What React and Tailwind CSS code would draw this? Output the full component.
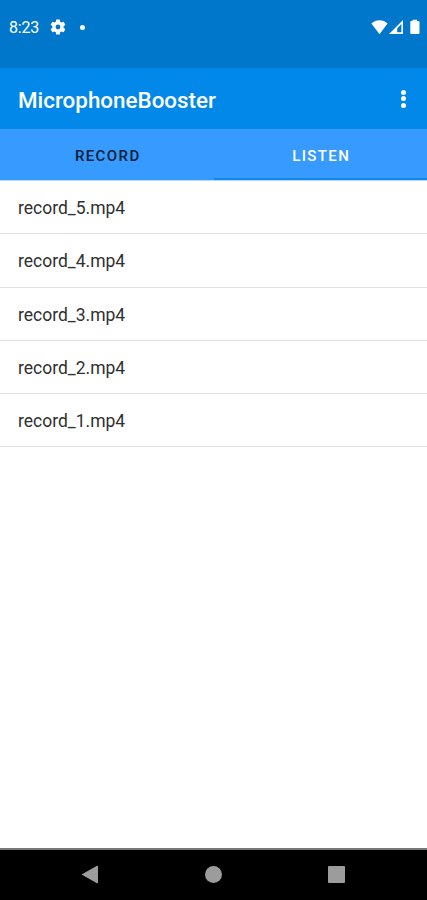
import React from "react";

const recordings = ["record_5.mp4", "record_4.mp4", "record_3.mp4", "record_2.mp4", "record_1.mp4"];

function StatusBar() {
  return (
    <div className="flex h-[68px] shrink-0 items-start bg-[#0077cb] pr-[7px] pl-[9px] pt-[17px] text-white">
      <span className="w-[42px] text-[16px] leading-[22px] tracking-[-0.2px]">8:23</span>
      <svg className="mt-[1px] -ml-[2px] h-[18px] w-[18px]" viewBox="0 0 24 24" fill="currentColor">
        <path d="M19.43 12.98c.04-.32.07-.64.07-.98s-.03-.66-.07-.98l2.11-1.65c.19-.15.24-.42.12-.64l-2-3.46c-.12-.22-.39-.3-.61-.22l-2.49 1c-.52-.4-1.08-.73-1.69-.98l-.38-2.65C14.46 2.18 14.25 2 14 2h-4c-.25 0-.46.18-.49.42l-.38 2.65c-.61.25-1.17.59-1.69.98l-2.49-1c-.23-.09-.49 0-.61.22l-2 3.46c-.13.22-.07.49.12.64l2.11 1.65c-.04.32-.07.65-.07.98s.03.66.07.98l-2.11 1.65c-.19.15-.24.42-.12.64l2 3.46c.12.22.39.3.61.22l2.49-1c.52.4 1.08.73 1.69.98l.38 2.65c.03.24.24.42.49.42h4c.25 0 .46-.18.49-.42l.38-2.65c.61-.25 1.17-.59 1.69-.98l2.49 1c.23.09.49 0 .61-.22l2-3.46c.12-.22.07-.49-.12-.64zM12 15.2A3.2 3.2 0 1 1 12 8.8a3.2 3.2 0 0 1 0 6.4z" />
      </svg>
      <span className="mt-[7.5px] ml-[12.5px] h-[5px] w-[5px] rounded-full bg-white" />
      <div className="mt-[2px] ml-auto flex">
        <svg className="h-[16px] w-[17px]" viewBox="0 0 17 16" fill="currentColor">
          <path d="M.4 4.6C2.5 2.3 5.3 1.2 8.5 1.2s6 1.1 8.1 3.4L8.5 15.2z" />
        </svg>
        <svg className="ml-[1px] h-[16px] w-[15px]" viewBox="0 0 15 16" fill="currentColor" fillRule="evenodd">
          <path d="M14 1v14H0zM12.4 5v8.3h-4.2V9.6z" />
        </svg>
        <svg className="ml-[6px] h-[16px] w-[10px]" viewBox="0 0 10 16" fill="currentColor">
          <path d="M2.6 .7h4.4v1.2h1.6c.5 0 .9.4.9.9v11.3c0 .5-.4.9-.9.9H1.2c-.5 0-.9-.4-.9-.9V2.8c0-.5.4-.9.9-.9h1.4z" />
        </svg>
      </div>
    </div>
  );
}

function Toolbar() {
  return (
    <header className="flex h-[61px] shrink-0 items-center justify-between bg-[#0288e9] pr-[21px] pl-[18px] text-white">
      <h1 className="pt-[3px] text-[22.4px] leading-[30px] font-medium whitespace-nowrap">MicrophoneBooster</h1>
      <button aria-label="More options" className="flex flex-col gap-[1.5px]">
        <span className="h-[5px] w-[5px] rounded-full bg-white" />
        <span className="h-[5px] w-[5px] rounded-full bg-white" />
        <span className="h-[5px] w-[5px] rounded-full bg-white" />
      </button>
    </header>
  );
}

function Tabs() {
  return (
    <nav className="grid h-[52px] shrink-0 grid-cols-2 border-b border-[#b4d7ff] bg-[#379aff] text-[15px] font-medium tracking-[1.4px]">
      <button className="border-b-2 border-transparent pt-[5px] pl-[2px] text-[#061e36]">RECORD</button>
      <button className="border-b-2 border-[#1288ec] pt-[5px] pl-[2px] text-white">LISTEN</button>
    </nav>
  );
}

function NavigationBar() {
  return (
    <footer className="flex h-[52px] shrink-0 items-center justify-between border-t-2 border-[#777] bg-black pr-[82px] pb-[2px] pl-[81px] text-[#9c9c9c]">
      <svg className="h-[19px] w-[17px]" viewBox="0 0 17 19" fill="currentColor">
        <path d="M.5 9.5 16 .8c.5-.3 1 0 1 .6v16.2c0 .6-.5.9-1 .6z" />
      </svg>
      <span className="ml-[1px] h-[17px] w-[17px] rounded-full bg-[#9c9c9c]" />
      <span className="h-[17px] w-[17px] rounded-[1px] bg-[#9c9c9c]" />
    </footer>
  );
}

export default function App() {
  return (
    <div className="flex h-[900px] w-[427px] flex-col overflow-hidden bg-white font-['Roboto',sans-serif]">
      <StatusBar />
      <Toolbar />
      <Tabs />
      <ul className="flex-1 bg-white">
        {recordings.map((name) => (
          <li key={name} className="flex h-[53.25px] items-center border-b border-[#e0e0e0] pt-[2px] pl-[18px] text-[17.5px] text-[#303030]">
            {name}
          </li>
        ))}
      </ul>
      <NavigationBar />
    </div>
  );
}
